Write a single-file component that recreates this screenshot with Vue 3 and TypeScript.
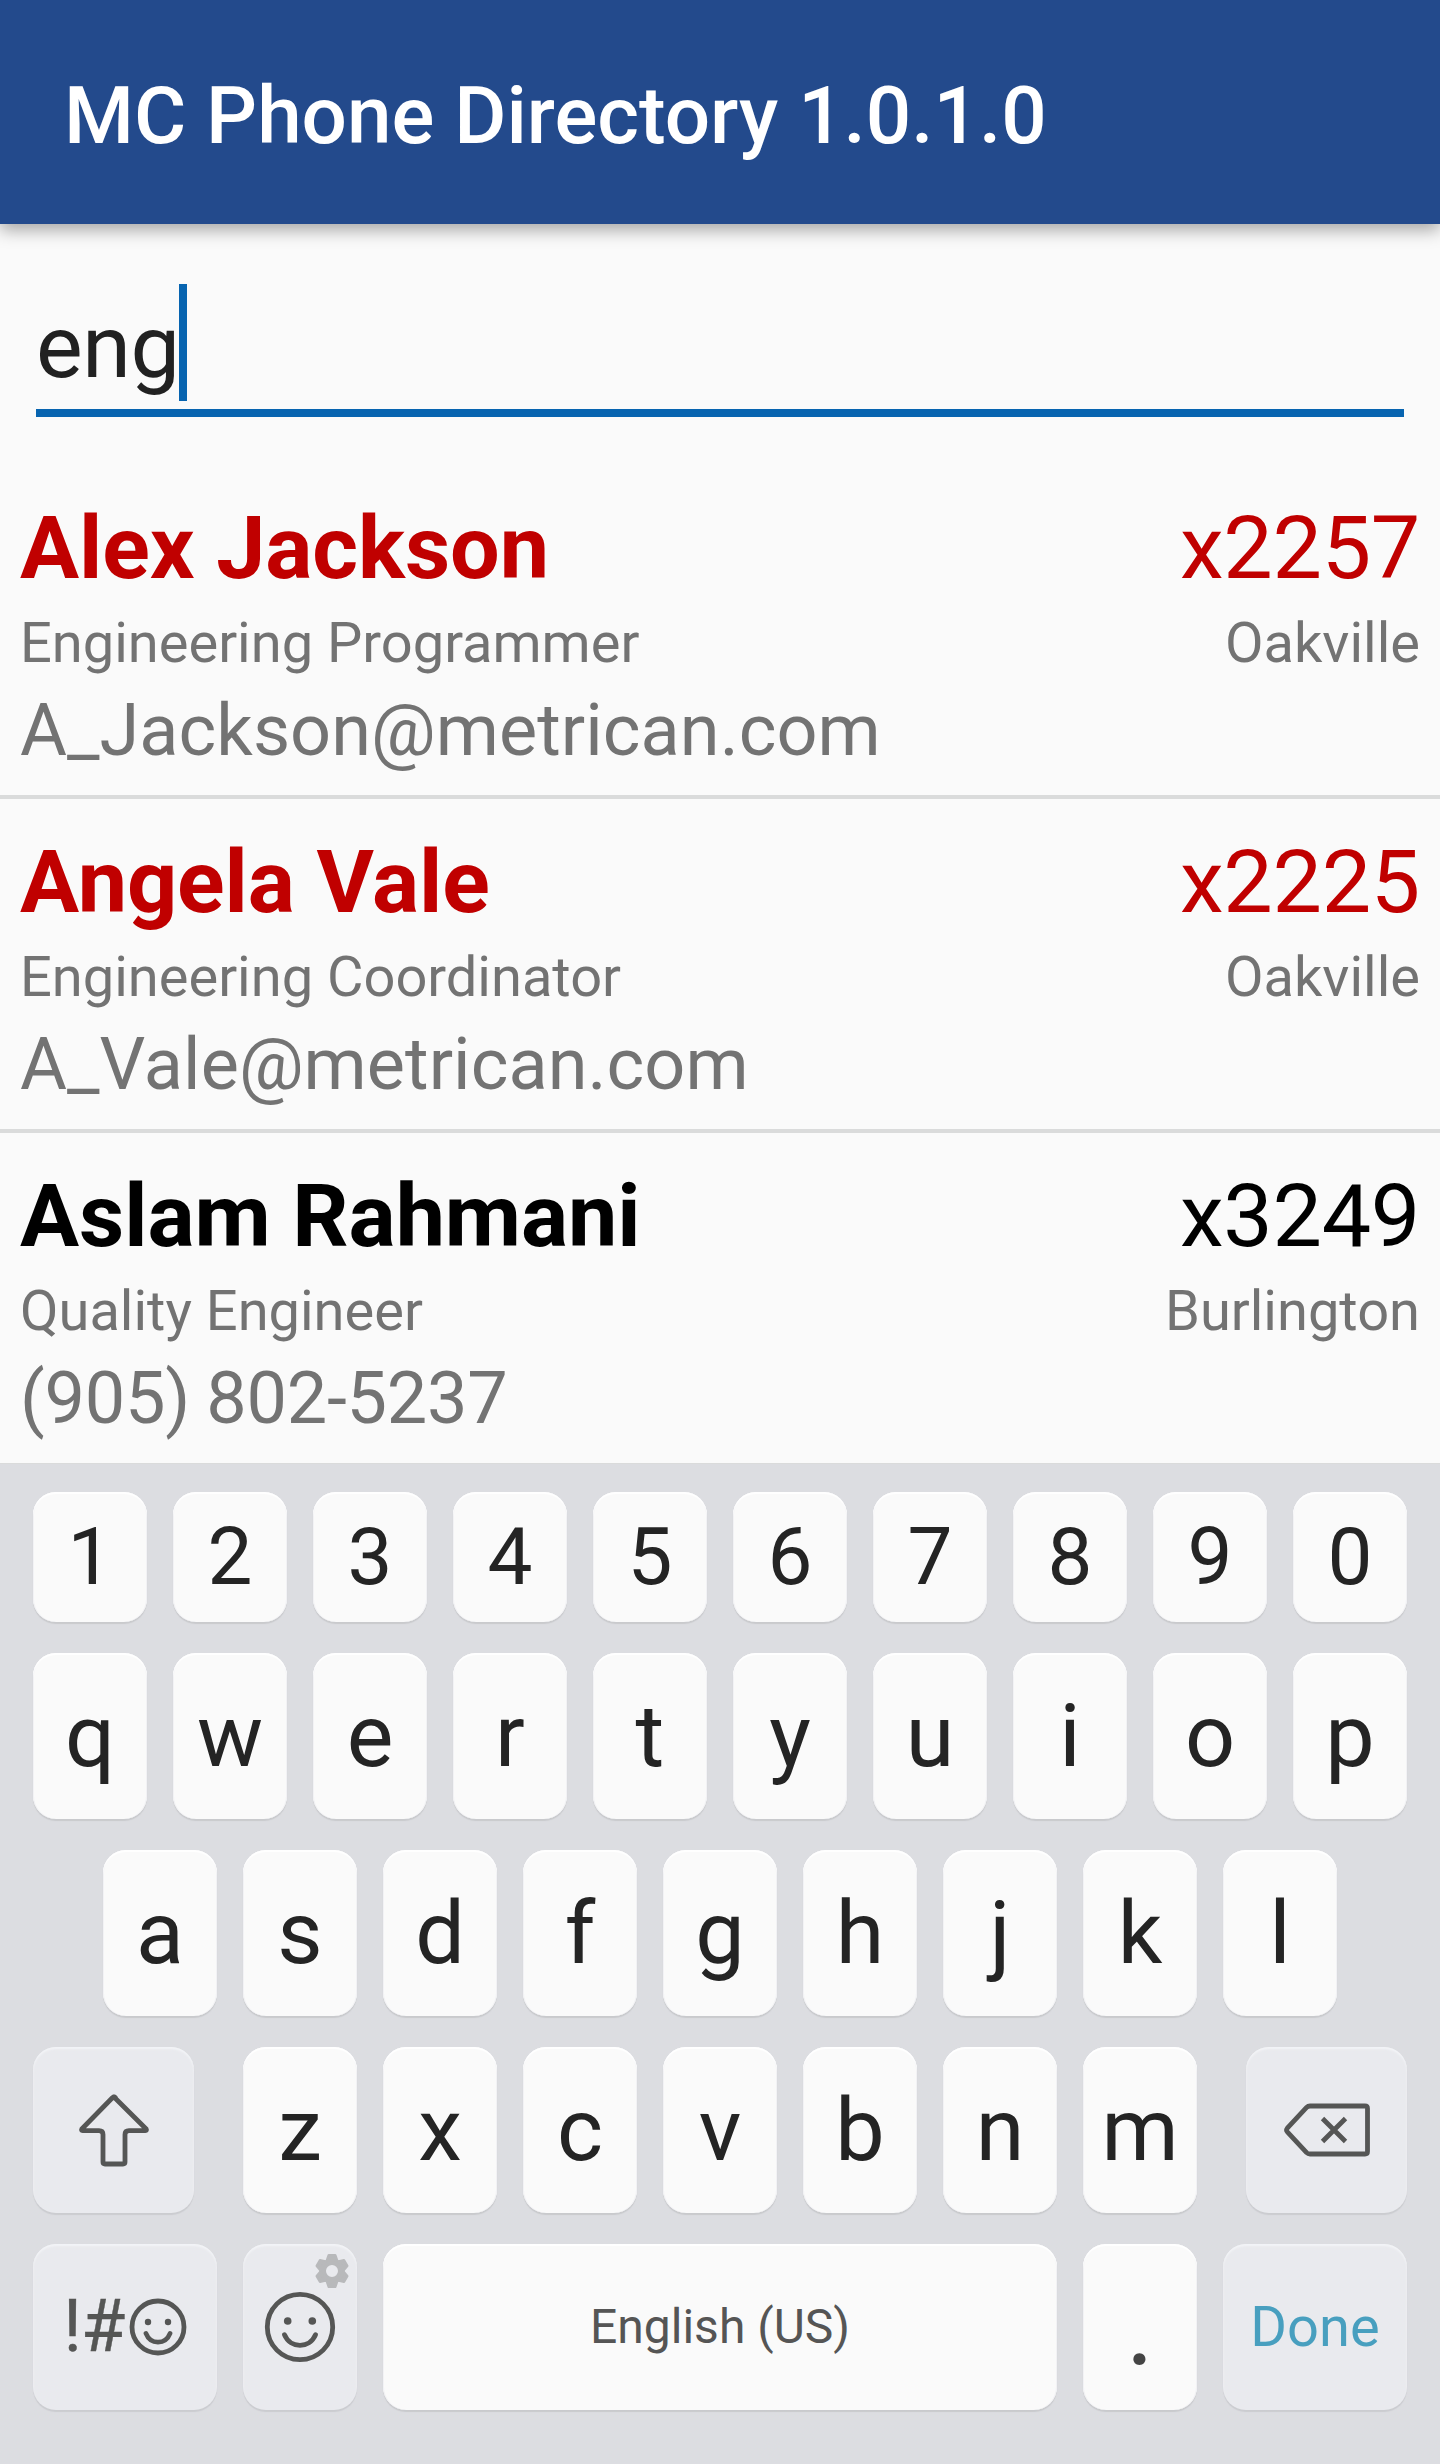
<script setup lang="ts">
import { ref } from 'vue'

interface Contact {
  name: string
  ext: string
  role: string
  office: string
  reach: string
  kind: 'email' | 'phone'
  highlighted: boolean
}

const query = ref<string>('eng')

const contacts: Contact[] = [
  { name: 'Alex Jackson', ext: 'x2257', role: 'Engineering Programmer', office: 'Oakville', reach: 'A_Jackson@metrican.com', kind: 'email', highlighted: true },
  { name: 'Angela Vale', ext: 'x2225', role: 'Engineering Coordinator', office: 'Oakville', reach: 'A_Vale@metrican.com', kind: 'email', highlighted: true },
  { name: 'Aslam Rahmani', ext: 'x3249', role: 'Quality Engineer', office: 'Burlington', reach: '(905) 802-5237', kind: 'phone', highlighted: false },
]

const digits: string[] = [...'1234567890']
const topRow: string[] = [...'qwertyuiop']
const homeRow: string[] = [...'asdfghjkl']
const bottomRow: string[] = [...'zxcvbnm']
</script>

<template>
  <div class="screen">
    <header class="app-bar">
      <h1 class="title">MC Phone Directory 1.0.1.0</h1>
    </header>

    <div class="search">
      <div class="field">
        <span class="query">{{ query }}</span><span class="caret"></span>
      </div>
    </div>

    <main class="list">
      <article v-for="c in contacts" :key="c.name" class="contact" :class="{ highlighted: c.highlighted }">
        <div class="line primary"><strong>{{ c.name }}</strong><span class="ext">{{ c.ext }}</span></div>
        <div class="line secondary"><span>{{ c.role }}</span><span>{{ c.office }}</span></div>
        <div class="line reach" :class="c.kind">{{ c.reach }}</div>
      </article>
    </main>

    <section class="keyboard">
      <div class="row digits">
        <div v-for="k in digits" :key="k" class="key">{{ k }}</div>
      </div>
      <div class="row">
        <div v-for="k in topRow" :key="k" class="key">{{ k }}</div>
      </div>
      <div class="row">
        <div v-for="k in homeRow" :key="k" class="key">{{ k }}</div>
      </div>
      <div class="row spread">
        <div class="key fn wide">
          <svg class="icon" width="72" height="74" viewBox="0 0 72 74">
            <path d="M36 4 L68.2 36 Q69 37.6 67.4 37.6 H51 Q47 37.6 47 41.6 V69 Q47 71 45 71 H27 Q25 71 25 69 V41.6 Q25 37.6 21 37.6 H4.6 Q3 37.6 3.8 36 L34.4 4.8 Q36 3.4 37.6 4.8" />
          </svg>
        </div>
        <div class="group">
          <div v-for="k in bottomRow" :key="k" class="key">{{ k }}</div>
        </div>
        <div class="key fn wide">
          <svg class="icon" width="88" height="56" viewBox="0 0 88 56">
            <path d="M27 4 H82 Q84.500 4 84.500 6.500 V49.500 Q84.500 52 82 52 H27 Q25 52 23.600 50.600 L4.300 29.800 Q2.800 28 4.300 26.200 L23.600 5.400 Q25 4 27 4 Z" />
            <path class="cross" d="M39.500 16.500 L62.500 39.500 M62.500 16.500 L39.500 39.500" />
          </svg>
        </div>
      </div>
      <div class="row">
        <div class="key fn symbols">
          <span class="marks">!#</span>
          <svg class="icon" width="58" height="58" viewBox="0 0 58 58">
            <circle cx="29" cy="29" r="26" />
            <circle class="solid" cx="19" cy="24" r="3.200" />
            <circle class="solid" cx="39" cy="24" r="3.200" />
            <path d="M17 35.500 C21.500 47 36.500 47 41 35.500" />
          </svg>
        </div>
        <div class="key fn emoji">
          <svg class="icon" width="72" height="72" viewBox="0 0 72 72">
            <circle cx="36" cy="36" r="32.700" />
            <circle class="solid" cx="23.700" cy="30" r="3.800" />
            <circle class="solid" cx="48.300" cy="30" r="3.800" />
            <path d="M20.500 43.800 C26.500 58 45.500 58 51.500 43.800" />
          </svg>
          <svg class="gear" width="34" height="34" viewBox="-17 -17 34 34">
            <circle r="9.300" fill="none" stroke-width="6.600" />
            <path v-for="a in 6" :key="a" :transform="`rotate(${a * 60})`" d="M-5 -10.500 L-3.200 -15.700 H3.200 L5 -10.500 Z" stroke-width="2.600" />
          </svg>
        </div>
        <div class="key space">English (US)</div>
        <div class="key period">.</div>
        <div class="key fn done">Done</div>
      </div>
    </section>
  </div>
</template>

<style>
body {
  margin: 0;
  background: #fafafa;
}
</style>

<style scoped>
.screen {
  width: 1440px;
  height: 2464px;
  display: flex;
  flex-direction: column;
  overflow: hidden;
  background: #fafafa;
  font-family: Roboto, "Liberation Sans", sans-serif;
}

.app-bar {
  height: 224px;
  flex: none;
  box-sizing: border-box;
  display: flex;
  align-items: center;
  padding: 8px 64px 0;
  background: #234a8c;
  box-shadow: 0 6px 16px rgba(0, 0, 0, 0.34);
}

.title {
  margin: 0;
  color: #fff;
  font-size: 80px;
  font-weight: 500;
  line-height: 94px;
  white-space: nowrap;
}

.search {
  height: 241px;
  flex: none;
  box-sizing: border-box;
  padding: 60px 36px 0;
}

.field {
  height: 125px;
  display: flex;
  align-items: flex-start;
  border-bottom: 8px solid #0764b0;
}

.query {
  font-size: 88px;
  line-height: 125px;
  letter-spacing: -0.4px;
  color: #212121;
}

.caret {
  width: 8px;
  height: 117px;
  background: #0764b0;
}

.list {
  height: 999px;
  flex: none;
  overflow: hidden;
}

.contact {
  height: 334px;
  box-sizing: border-box;
  padding: 31px 20px 0;
  border-bottom: 4px solid #dadbdb;
  color: #000;
}

.highlighted {
  color: #c00000;
}

.line {
  display: flex;
  justify-content: space-between;
  white-space: nowrap;
}

.primary {
  font-size: 88px;
  line-height: 104px;
}

.primary strong {
  font-weight: 700;
  letter-spacing: -0.08px;
}

.ext {
  letter-spacing: -0.3px;
}

.secondary {
  font-size: 56px;
  line-height: 86px;
  color: #737373;
}

.reach {
  font-size: 72px;
  line-height: 90px;
  color: #737373;
}

.email {
  letter-spacing: 0.06px;
}

.phone {
  letter-spacing: -0.22px;
  word-spacing: -1.5px;
}

.keyboard {
  flex: 1;
  display: flex;
  flex-direction: column;
  gap: 31px;
  padding: 28px 33px 0;
  background: #dcdde1;
}

.row,
.group {
  display: flex;
  justify-content: center;
  gap: 26px;
}

.row {
  height: 166px;
  flex: none;
}

.spread {
  justify-content: space-between;
}

.key {
  width: 114px;
  flex: none;
  display: flex;
  align-items: center;
  justify-content: center;
  border-radius: 23px;
  background: #fafafa;
  box-shadow: inset 0 2px 1px #fff, inset 1px 0 #f1f1f4, inset -1px 0 #f1f1f4, 0 2px 1px #c9cacd;
  color: #242424;
  font-size: 88px;
  line-height: 104px;
}

.digits {
  height: 130px;
}

.digits .key {
  font-size: 80px;
}

.fn {
  position: relative;
  background: #e9eaee;
  box-shadow: inset 0 2px 2px #f3f4f7, 0 2px 1px #cbccd0;
}

.wide {
  width: 161px;
}

.symbols {
  width: 184px;
  gap: 4px;
}

.marks {
  font-size: 72px;
  letter-spacing: -0.6px;
  color: #555655;
  -webkit-text-stroke: 0.4px #555655;
}

.space {
  width: 674px;
  font-size: 48px;
  color: #555;
}

.period {
  font-size: 108px;
  color: #444;
}

.done {
  width: 184px;
  font-size: 56px;
  color: #489fbf;
}

.icon {
  flex: none;
  fill: none;
  stroke: #555655;
  stroke-width: 4.8;
  stroke-linecap: round;
  stroke-linejoin: round;
}

.icon .solid {
  fill: #555655;
  stroke: none;
}

.icon .cross {
  stroke-linecap: butt;
}

.gear {
  position: absolute;
  top: 10px;
  right: 8px;
  fill: #b8b9bb;
  stroke: #b8b9bb;
  stroke-linejoin: round;
}
</style>
